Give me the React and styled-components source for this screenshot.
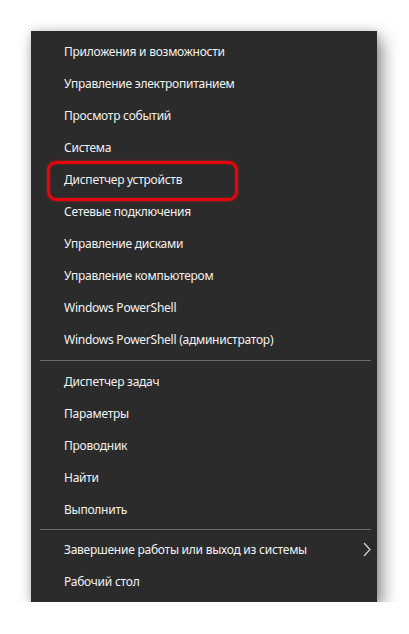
import React from "react";
import styled, { createGlobalStyle } from "styled-components";

const GlobalStyle = createGlobalStyle`
  html, body {
    margin: 0;
    background: #ffffff;
  }
  body {
    font-family: "Noto Sans", "Open Sans", sans-serif;
  }
`;

const Page = styled.div`
  padding: 31px 0 0 31px;
`;

const Menu = styled.div`
  width: 346px;
  background: #2b2b2b;
  padding: 4px 0 5px;
  box-shadow: 5px 7px 16px rgba(0, 0, 0, 0.45), 0 0 8px rgba(0, 0, 0, 0.15);
`;

const Item = styled.div`
  position: relative;
  height: 32px;
  display: flex;
  align-items: center;
  padding-left: 33px;
  color: #f2f2f2;
  font-size: 12px;
  letter-spacing: -0.25px;
`;

const Separator = styled.div`
  height: ${(p) => p.$h}px;
  display: flex;
  align-items: center;
  padding: 0 6px 0 9px;
  &::after {
    content: "";
    flex: 1;
    height: 1px;
    background: #6b6b6b;
  }
`;

const Highlight = styled.span`
  position: absolute;
  left: 16px;
  top: -2px;
  width: 191px;
  height: 40px;
  box-sizing: border-box;
  border: 3px solid #e3060f;
  border-radius: 9px;
  box-shadow: 0 0 3px rgba(255, 20, 20, 0.6), inset 0 0 2px rgba(255, 20, 20, 0.5);
`;

const Chevron = styled.svg`
  position: absolute;
  right: 6px;
  top: 9px;
`;

const sections = [
  [
    "Приложения и возможности",
    "Управление электропитанием",
    "Просмотр событий",
    "Система",
    "Диспетчер устройств",
    "Сетевые подключения",
    "Управление дисками",
    "Управление компьютером",
    "Windows PowerShell",
    "Windows PowerShell (администратор)",
  ],
  ["Диспетчер задач", "Параметры", "Проводник", "Найти", "Выполнить"],
  ["Завершение работы или выход из системы", "Рабочий стол"],
];

const sepHeights = [0, 10, 8];

export default function App() {
  return (
    <>
      <GlobalStyle />
      <Page>
        <Menu>
          {sections.map((items, si) => (
            <React.Fragment key={si}>
              {si > 0 && <Separator $h={sepHeights[si]} />}
              {items.map((label) => (
                <Item key={label}>
                  {label}
                  {label === "Диспетчер устройств" && <Highlight />}
                  {label.startsWith("Завершение") && (
                    <Chevron width="8" height="15" viewBox="0 0 8 15">
                      <path d="M1 1 L7 7.5 L1 14" fill="none" stroke="#d8d8d8" strokeWidth="1.2" />
                    </Chevron>
                  )}
                </Item>
              ))}
            </React.Fragment>
          ))}
        </Menu>
      </Page>
    </>
  );
}
